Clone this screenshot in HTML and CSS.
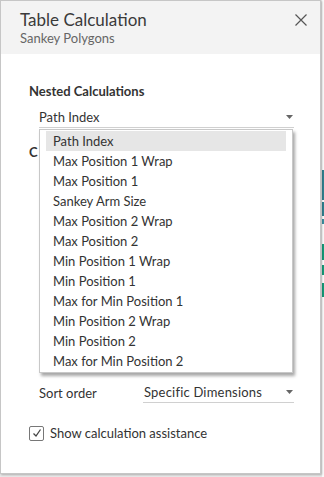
FILE: index.html
```html
<!DOCTYPE html>
<html>
<head>
<meta charset="utf-8">
<link rel="stylesheet" href="styles.css">
</head>
<body>
<div class="screen">
  <div class="dialog">
    <div class="header">
      <div class="titles">
        <div class="title">Table Calculation</div>
        <div class="subtitle">Sankey Polygons</div>
      </div>
      <svg class="close" width="12" height="12" viewBox="0 0 12 12"><path d="M0.5 0.5 L11.5 11.5 M11.5 0.5 L0.5 11.5" stroke="#555" stroke-width="1.2" fill="none"/></svg>
    </div>
    <div class="body">
      <div class="section-title">Nested Calculations</div>
      <div class="select nested">
        <span>Path Index</span>
        <svg class="caret" width="7" height="4" viewBox="0 0 7 4"><path d="M0 0 H7 L3.5 4 Z" fill="#666"/></svg>
      </div>
      <div class="section-title compute">C</div>
      <div class="hidden-area"></div>
      <div class="row">
        <span class="label">Sort order</span>
        <div class="select sort">
          <span>Specific Dimensions</span>
          <svg class="caret" width="7" height="4" viewBox="0 0 7 4"><path d="M0 0 H7 L3.5 4 Z" fill="#666"/></svg>
        </div>
      </div>
      <label class="check">
        <span class="box"><svg width="10" height="10" viewBox="0 0 10 10"><path d="M1.5 5.5 L4 8 L8.5 1.5" stroke="#444" stroke-width="1.3" fill="none"/></svg></span>
        <span>Show calculation assistance</span>
      </label>
    </div>
    <ul class="menu">
      <li class="active">Path Index</li>
      <li>Max Position 1 Wrap</li>
      <li>Max Position 1</li>
      <li>Sankey Arm Size</li>
      <li>Max Position 2 Wrap</li>
      <li>Max Position 2</li>
      <li>Min Position 1 Wrap</li>
      <li>Min Position 1</li>
      <li>Max for Min Position 1</li>
      <li>Min Position 2 Wrap</li>
      <li>Min Position 2</li>
      <li>Max for Min Position 2</li>
    </ul>
  </div>
  <div class="backdrop">
    <div class="bar teal" style="height:30px;margin-top:170px"></div>
    <div class="bar teal" style="height:14px;margin-top:2px"></div>
    <div class="bar teal2" style="height:5px;margin-top:3px"></div>
    <div class="bar green" style="height:16px;margin-top:20px"></div>
    <div class="bar green" style="height:10px;margin-top:5px"></div>
    <div class="bar green" style="height:14px;margin-top:8px"></div>
  </div>
</div>
</body>
</html>
```

FILE: styles.css
```css
html, body {
  margin: 0;
  padding: 0;
  background: #ffffff;
}
body {
  font-family: Lato, "Open Sans", sans-serif;
  color: #333;
  width: 324px;
  height: 477px;
  overflow: hidden;
}
.screen {
  display: flex;
  width: 324px;
  height: 477px;
  background: #e9e9e9;
}
.dialog {
  position: relative;
  width: 319px;
  height: 472px;
  border: 1px solid #c6c6c6;
  background: #fff;
  box-shadow: 1px 1px 2px rgba(0,0,0,0.25);
  flex: none;
}
.backdrop {
  flex: 1;
  margin-left: 1px;
  background: #fafafa;
  display: flex;
  flex-direction: column;
}
.bar { width: 100%; }
.teal { background: #2f7f8f; }
.teal2 { background: #3b8fa0; }
.green { background: #159a78; }
.header {
  background: #f3f3f3;
  height: 53px;
  display: flex;
  justify-content: space-between;
  align-items: flex-start;
  padding: 0 13px 0 19px;
}
.titles { padding-top: 8px; }
.title {
  font-size: 17px;
  line-height: 21px;
  color: #3a3a3a;
}
.subtitle {
  font-size: 13px;
  line-height: 17px;
  color: #666;
}
.close { margin-top: 13px; }
.body {
  padding: 27px 26px 0 28px;
}
.section-title {
  font-size: 13px;
  font-weight: bold;
  line-height: 20px;
  color: #333;
}
.select {
  display: flex;
  justify-content: space-between;
  align-items: center;
  font-size: 13px;
  color: #333;
  height: 20px;
  border-bottom: 1px solid #d0d0d0;
}
.nested {
  margin: 6px 0 0 10px;
  padding-right: 1px;
}
.compute { margin-top: 14px; }
.hidden-area { height: 220px; }
.row {
  display: flex;
  align-items: center;
  margin-left: 10px;
}
.label {
  font-size: 13px;
  width: 104px;
}
.sort {
  flex: 1;
  padding-left: 1px;
  padding-right: 1px;
  letter-spacing: 0.2px;
}
.check {
  display: flex;
  align-items: center;
  margin-top: 22px;
  font-size: 13px;
  color: #333;
}
.box {
  width: 13px;
  height: 13px;
  border: 1px solid #777;
  border-radius: 2px;
  display: flex;
  align-items: center;
  justify-content: center;
  margin-right: 6px;
  background: #fff;
}
.menu {
  position: absolute;
  left: 38px;
  top: 128px;
  width: 254px;
  margin: 0;
  padding: 1px 6px 1px 6px;
  box-sizing: border-box;
  list-style: none;
  background: #fff;
  border: 1px solid #c8c8c8;
  box-shadow: 2px 3px 3px rgba(0,0,0,0.35);
}
.menu li {
  height: 20px;
  line-height: 20px;
  font-size: 13px;
  padding-left: 7px;
  color: #333;
}
.menu li.active { background: #e6e6e6; }
```
